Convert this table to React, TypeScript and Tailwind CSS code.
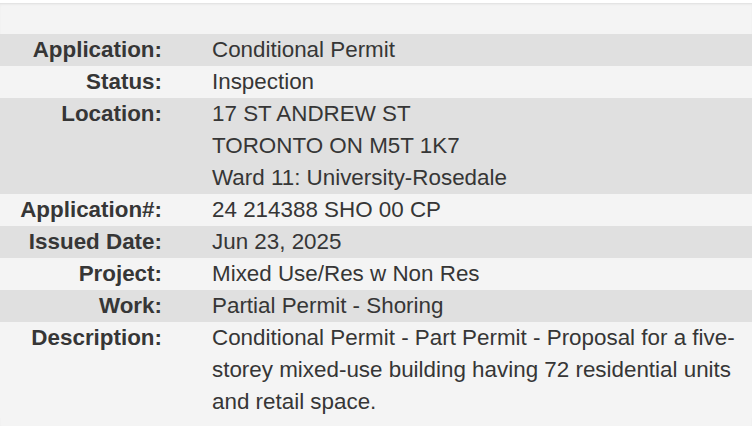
const rows: { label: string; value: string[] }[] = [
  { label: "Application:", value: ["Conditional Permit"] },
  { label: "Status:", value: ["Inspection"] },
  { label: "Location:", value: ["17 ST ANDREW ST", "TORONTO ON M5T 1K7", "Ward 11: University-Rosedale"] },
  { label: "Application#:", value: ["24 214388 SHO 00 CP"] },
  { label: "Issued Date:", value: ["Jun 23, 2025"] },
  { label: "Project:", value: ["Mixed Use/Res w Non Res"] },
  { label: "Work:", value: ["Partial Permit - Shoring"] },
  {
    label: "Description:",
    value: ["Conditional Permit - Part Permit - Proposal for a five-storey mixed-use building having 72 residential units and retail space."],
  },
];

export default function App() {
  return (
    <div className="w-[752px] h-[426px] bg-white pt-[3px] overflow-hidden font-['Liberation_Sans',Arial,sans-serif]">
      <div className="h-full bg-[#f4f4f4] border-t border-[#e4e4e4] shadow-[inset_0_1px_2px_rgba(0,0,0,0.04)]">
        <div className="h-[30px]" />
        <div className="flex flex-col text-[22.4px] leading-[32px] text-[#363636]">
          {rows.map((row, i) => (
            <div key={row.label} className={`flex ${i % 2 === 0 ? "bg-[#e0e0e0]" : "bg-[#f4f4f4]"}`}>
              <div className="w-[162px] shrink-0 text-right font-bold">{row.label}</div>
              <div className="pl-[50px] pr-[12px] flex-1">
                {row.value.map((line) => (
                  <div key={line}>{line}</div>
                ))}
              </div>
            </div>
          ))}
        </div>
      </div>
    </div>
  );
}
